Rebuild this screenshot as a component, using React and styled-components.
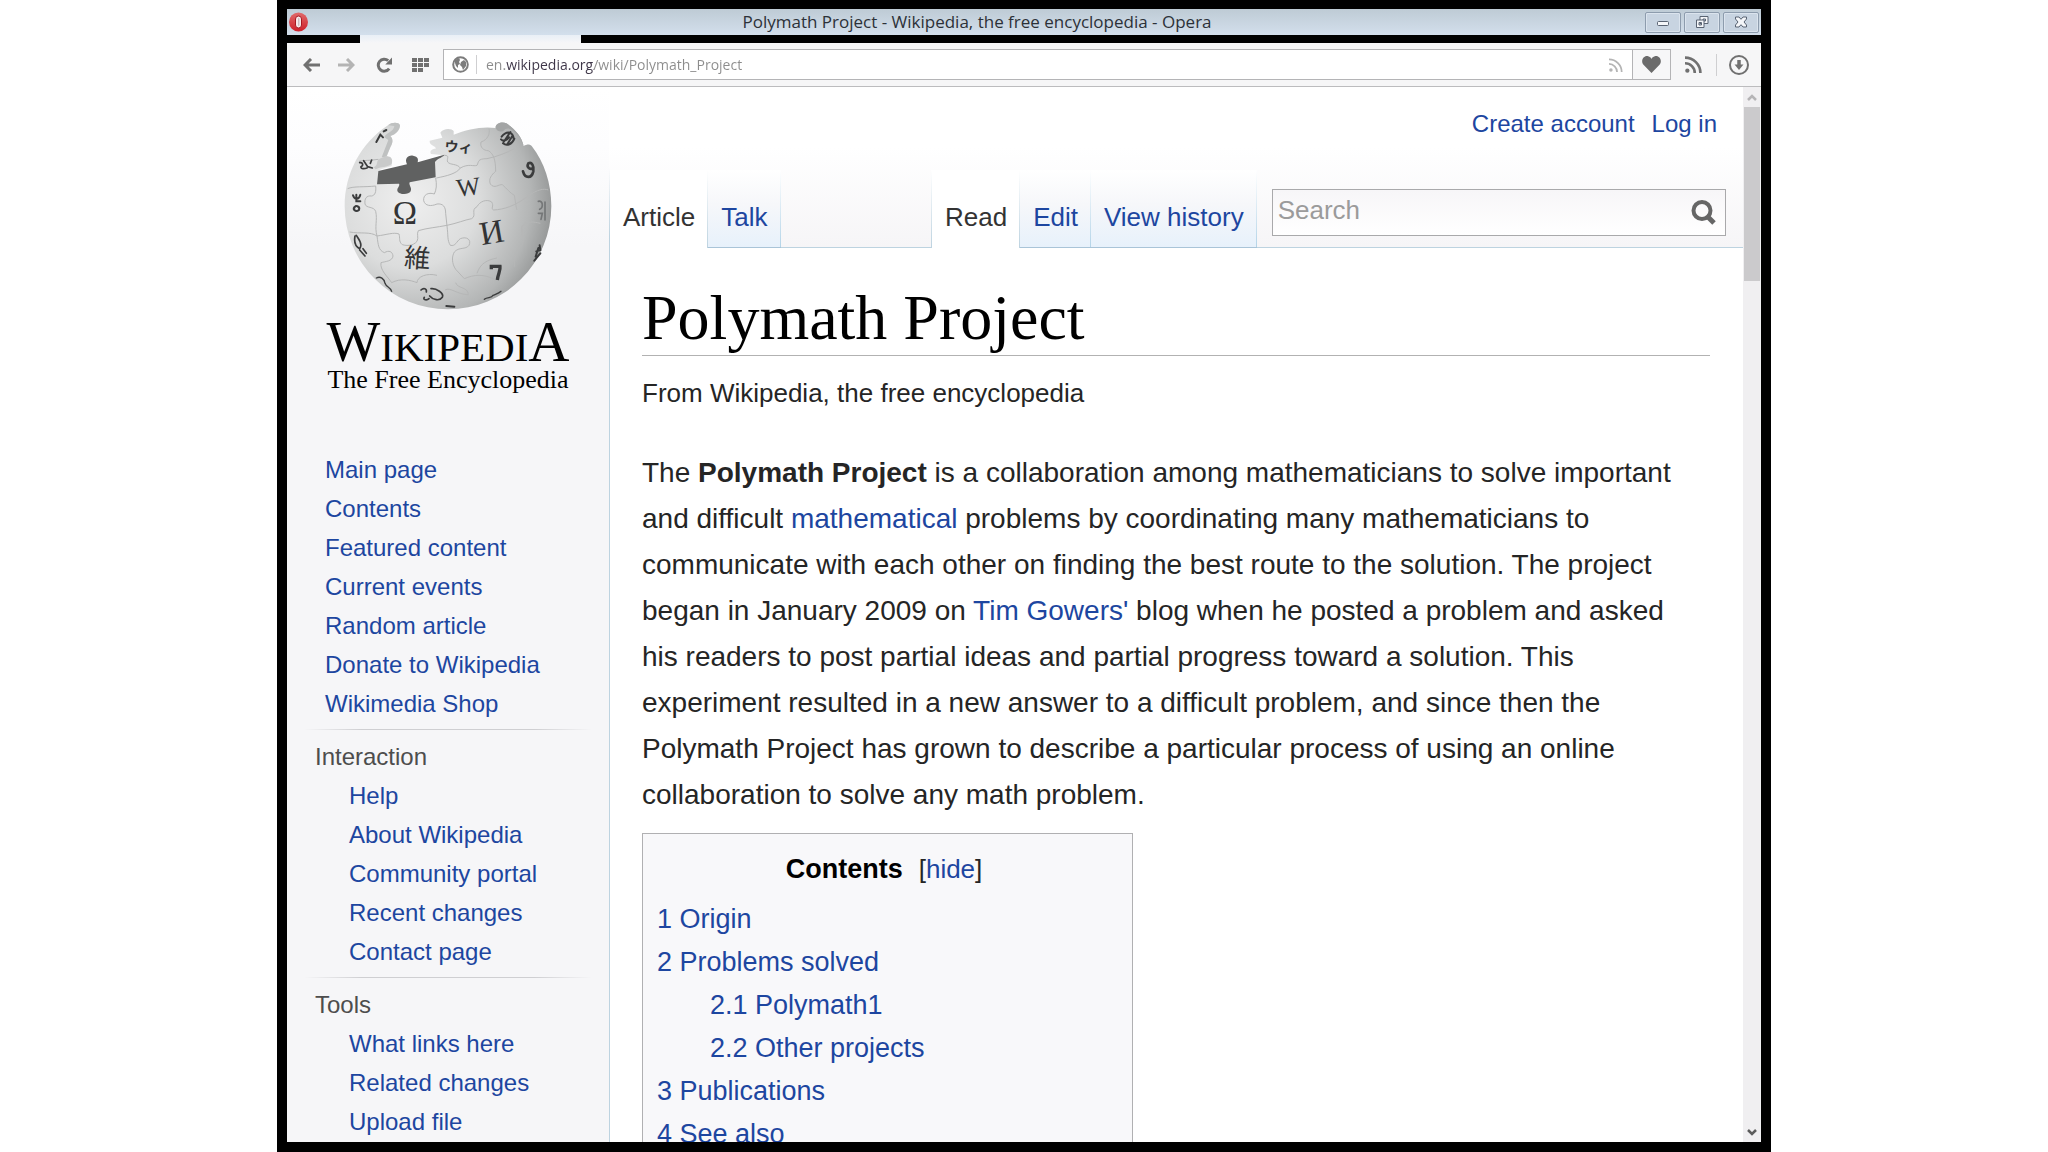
import React from "react";
import styled, { createGlobalStyle, css } from "styled-components";

const sans = `"Liberation Sans", Arial, sans-serif`;
const serif = `"Liberation Serif", "Times New Roman", serif`;
const ui = `"Open Sans", "Noto Sans", sans-serif`;
const linkBlue = "#1d46a0";
const rule = "#bdd3e0";

const GlobalStyle = createGlobalStyle`
  *, *::before, *::after { box-sizing: border-box; }
  body { margin: 0; background: #fff; font-family: ${sans}; color: #252525; }
  button { padding: 0; border: 0; background: none; font: inherit; color: inherit; }
  ul { list-style: none; margin: 0; padding: 0; }
  svg { display: block; flex: none; }
`;

const Frame = styled.div`
  display: flex;
  flex-direction: column;
  height: 100vh;
  margin: 0 277px;
  border: 10px solid #000;
  border-top-width: 9px;
  background: #fff;
  overflow: hidden;
`;

/* Window chrome */
const TitleBar = styled.header`
  display: flex;
  align-items: center;
  flex: none;
  height: 26px;
  padding: 0 2px;
  background: linear-gradient(#becbd5, #d3dfec);
`;
const TitleText = styled.div`
  flex: 1;
  text-align: center;
  font: 17px/24px ${ui};
  color: #2c3138;
`;
const WindowButtons = styled.div`
  display: flex;
  gap: 3px;
`;
const WindowButton = styled.button`
  display: flex;
  align-items: center;
  justify-content: center;
  width: 36px;
  height: 21px;
  border: 1px solid #8d9cad;
  border-radius: 2px;
  background: #c8d4e1;
  box-shadow: inset 0 0 0 1px #dbe4ee;
`;
const TabStrip = styled.div`
  flex: none;
  height: 8px;
  padding-left: 73px;
  background: #000;
`;
const ActiveTab = styled.div`
  width: 221px;
  height: 8px;
  background: linear-gradient(#e9eff6, #f6f6f8);
`;
const Toolbar = styled.div`
  display: flex;
  align-items: center;
  flex: none;
  height: 44px;
  padding-left: 13px;
  border-bottom: 1px solid #bcbcbe;
  background: #f6f6f7;
`;
const ToolButton = styled.button`
  display: flex;
  align-items: center;
  justify-content: center;
  width: ${(p) => p.$w || 37}px;
  height: 30px;
  color: ${(p) => (p.$dim ? "#b4b4b4" : "#707070")};
`;
const AddressBar = styled.form`
  display: flex;
  align-items: center;
  flex: 1;
  min-width: 0;
  height: 31px;
  margin-left: 1px;
  border: 1px solid #b4b4b6;
  background: #fff;
`;
const Divider = styled.span`
  width: 1px;
  height: ${(p) => p.$h}px;
  background: #cfcfd1;
`;
const AddressInput = styled.input`
  flex: 1;
  min-width: 0;
  height: 28px;
  margin-left: 9px;
  padding: 0;
  border: 0;
  outline: 0;
  font: 14px/28px ${ui};
  color: #8c8c8c;
  background: linear-gradient(90deg, #8c8c8c 19px, #3d3547 19px, #3d3547 108px, #8c8c8c 108px);
  -webkit-background-clip: text;
  background-clip: text;
  -webkit-text-fill-color: transparent;
`;
const HeartButton = styled(ToolButton)`
  width: 38px;
  height: 29px;
  border-left: 1px solid #b4b4b6;
  background: #f7f7f8;
`;

/* Page area */
const Viewport = styled.div`
  display: flex;
  flex: 1;
  min-height: 0;
`;
const Sidebar = styled.aside`
  flex: 0 0 322px;
  padding: 13px 17px 0;
  background: linear-gradient(#fff 0, #fdfdfe 60px, #f6f6f8 160px);
  overflow: hidden;
`;
const Logo = styled.a`
  display: flex;
  flex-direction: column;
  align-items: center;
  height: 350px;
  color: #000;
  font-family: ${serif};
  text-decoration: none;
`;
const Wordmark = styled.span`
  height: 52px;
  margin-top: 4px;
  font-size: 41px;
  line-height: 56px;
  white-space: nowrap;
`;
const Big = styled.span`
  font-size: 57px;
`;
const Tagline = styled.span`
  font-size: 26px;
  line-height: 28px;
  white-space: nowrap;
`;
const Portal = styled.nav`
  font-size: 24px;
  line-height: 39px;
  white-space: nowrap;
  & + &::before {
    content: "";
    display: block;
    height: 1px;
    margin: 6px 0 7px;
    background: linear-gradient(90deg, transparent, #cfcfd2 20%, #cfcfd2 80%, transparent);
  }
`;
const PortalTitle = styled.h3`
  margin: 0;
  padding-left: 11px;
  font-size: 24px;
  font-weight: 400;
  color: #4d4d4d;
`;
const PortalList = styled.ul`
  padding-left: ${(p) => (p.$nested ? 45 : 21)}px;
`;
const Link = styled.a`
  color: ${linkBlue};
  text-decoration: none;
`;

const Main = styled.main`
  flex: 1;
  min-width: 0;
  overflow: hidden;
`;
const PageHead = styled.div`
  display: flex;
  flex-direction: column;
  justify-content: space-between;
  height: 161px;
  background:
    linear-gradient(transparent 80px, ${rule} 150px) left / 1px 100% no-repeat,
    linear-gradient(#fff 60px, #f6f5f7 160px);
  box-shadow: inset 0 -1px ${rule};
`;
const Personal = styled.div`
  display: flex;
  justify-content: flex-end;
  gap: 17px;
  padding: 22px 26px 0 0;
  font-size: 24px;
  line-height: 30px;
`;
const TabRow = styled.div`
  display: flex;
  height: 78px;
  padding-left: 1px;
`;
const TabGroup = styled.nav`
  display: flex;
  flex: none;
  width: ${(p) => (p.$w ? p.$w + "px" : "auto")};
  background: linear-gradient(#fff, ${rule}) right / 1px 100% no-repeat;
`;
const Tab = styled.a`
  padding: 30px 13px 0;
  font-size: 26px;
  line-height: 34px;
  white-space: nowrap;
  text-decoration: none;
  ${(p) =>
    p.$selected
      ? css`
          color: #333;
          background: linear-gradient(#fff, ${rule}) right / 1px 100% no-repeat, #fff;
        `
      : css`
          color: ${linkBlue};
          border-bottom: 1px solid #a9c4d8;
          background:
            linear-gradient(#fff, #b4d4e8) right / 1px 100% no-repeat,
            linear-gradient(#fff 0, #f6f7fa 45%, #e7f1fb 100%);
        `}
`;
const SearchForm = styled.form`
  display: flex;
  align-items: center;
  flex: 1;
  min-width: 0;
  height: 47px;
  margin: 19px 17px 0 15px;
  padding: 0 9px 0 5px;
  border: 1px solid #a9a9ab;
  background: linear-gradient(#f7f6f8, #fff);
`;
const SearchInput = styled.input`
  flex: 1;
  min-width: 0;
  padding: 0 0 5px;
  border: 0;
  outline: 0;
  background: none;
  font: 26px/34px ${sans};
  &::placeholder { color: #9b9b9b; opacity: 1; }
`;
const Article = styled.article`
  padding: 36px 33px 0 32px;
  border-left: 1px solid ${rule};
`;
const Title = styled.h1`
  margin: 0;
  padding-bottom: 3px;
  border-bottom: 1px solid #b2b2b2;
  font: 400 64px/68px ${serif};
  color: #000;
`;
const Subtitle = styled.div`
  margin-top: 20px;
  font-size: 26px;
  line-height: 34px;
`;
const Paragraph = styled.p`
  margin: 40px 0 15px;
  padding-right: 12px;
  font-size: 28px;
  line-height: 46px;
`;
const Toc = styled.section`
  width: 491px;
  height: 420px;
  padding: 14px;
  border: 1px solid #b0b0b2;
  background: #f8f8fa;
  font-size: 27px;
  line-height: 43px;
`;
const TocHead = styled.div`
  display: flex;
  justify-content: center;
  gap: 16px;
  height: 50px;
  padding-right: 7px;
`;
const TocTitle = styled.h2`
  margin: 0;
  font-size: 27px;
  color: #000;
`;
const Toggle = styled.span`
  font-size: 26px;
`;
const SubList = styled.ul`
  padding-left: 53px;
`;

const ScrollTrack = styled.div`
  display: flex;
  flex-direction: column;
  flex: 0 0 18px;
  padding: 0 1px;
  background: #f0eff1;
`;
const ScrollArrow = styled.button`
  display: flex;
  align-items: center;
  justify-content: center;
  height: 20px;
`;
const Thumb = styled.div`
  height: 174px;
  background: #cbcacc;
`;
const Spring = styled.div`
  flex: 1;
`;

const OperaIcon = () => (
  <svg width="20" height="20" viewBox="0 0 20 20">
    <defs>
      <linearGradient id="op" x1="0" y1="0" x2="0" y2="1">
        <stop offset="0" stopColor="#e06a6a" />
        <stop offset="1" stopColor="#cf1f2a" />
      </linearGradient>
    </defs>
    <circle cx="9.5" cy="10" r="9.5" fill="url(#op)" />
    <rect x="6.5" y="4" width="6" height="12" rx="3" fill="#f6e9ea" stroke="#a71720" strokeWidth="1" />
    <rect x="9" y="6" width="1.4" height="8" rx=".7" fill="#c9bcc0" />
  </svg>
);
const Arrow = ({ flip }) => (
  <svg width="17" height="14" viewBox="0 0 17 14" fill="none" stroke="currentColor" strokeWidth="3">
    <path d={flip ? "M0 7h14M9 1l6 6-6 6" : "M17 7H3M8 1L2 7l6 6"} />
  </svg>
);
const ReloadIcon = () => (
  <svg width="17" height="16" viewBox="0 0 17 16">
    <path d="M13.2 11.6A6 6 0 1 1 12.2 3.6" fill="none" stroke="currentColor" strokeWidth="3" />
    <path d="M16 .5V7.500H9.300Z" fill="currentColor" />
  </svg>
);
const GridIcon = () => (
  <svg width="17" height="14" viewBox="0 0 17 14" fill="currentColor">
    {[0, 6, 12].map((x) =>
      [0, 5, 10].map((y) => (x === 12 && y === 10 ? null : <rect key={x + "-" + y} x={x} y={y} width="5" height="4" />))
    )}
  </svg>
);
const GlobeIcon = () => (
  <svg width="17" height="17" viewBox="0 0 17 17">
    <circle cx="8.500" cy="8.500" r="7.300" fill="#fff" stroke="#7c7c7c" strokeWidth="2" />
    <path d="M3 4l4-2 1 2-1 2 1 2-2 1 0 3-2-2-1-3zM9 6l3-2 2 2 0 4-3 4-1-3-2-2z" fill="#7c7c7c" />
  </svg>
);
const FeedIcon = ({ size, w }) => (
  <svg width={size} height={size} viewBox="0 0 16 16" fill="none" stroke="currentColor" strokeWidth={w}>
    <circle cx="2.200" cy="13.800" r="2" fill="currentColor" stroke="none" />
    <path d="M0 6.800A9.200 9.200 0 0 1 9.200 16M0 1.500A14.500 14.500 0 0 1 14.500 16" />
  </svg>
);
const HeartIcon = () => (
  <svg width="19" height="17" viewBox="0 0 19 17">
    <path d="M9.500 17L1.500 8.700C-2 4.500 2-1 6.200.300 7.800.700 9 1.800 9.500 3 10 1.800 11.200.700 12.800.300 17-1 21 4.500 17.500 8.700Z" fill="#6b6b6b" />
  </svg>
);
const DownloadIcon = () => (
  <svg width="20" height="20" viewBox="0 0 20 20" fill="none" stroke="#707070" strokeWidth="2">
    <circle cx="10" cy="10" r="9" />
    <path d="M10 5v5" strokeWidth="3.500" />
    <path d="M5.500 9.500h9L10 15z" fill="#707070" stroke="none" />
  </svg>
);
const SearchIcon = () => (
  <svg width="25" height="25" viewBox="0 0 25 25" fill="none" stroke="#666">
    <circle cx="11" cy="10.500" r="8.500" strokeWidth="4" />
    <path d="M16.500 16.500l6.500 6.500" strokeWidth="5" />
  </svg>
);
const MinimizeIcon = () => (
  <svg width="14" height="14" viewBox="0 0 14 14">
    <rect x="1.500" y="6.500" width="11" height="4" rx="1" fill="#f4f6f9" stroke="#596372" />
  </svg>
);
const RestoreIcon = () => (
  <svg width="14" height="14" viewBox="0 0 14 14" fill="#f4f6f9" stroke="#596372">
    <path d="M5 1.500h8v7H5zM8 4h2.500v2H8z" fillRule="evenodd" />
    <path d="M1.500 5h7.500v7.500H1.500zM4 7.500h2.500V10H4z" fillRule="evenodd" />
  </svg>
);
const CloseIcon = () => (
  <svg width="14" height="14" viewBox="0 0 14 14">
    <path d="M1.500 2h3.500l2 2.300L9 2h3.500v2L10 7l2.500 3v2H9L7 9.700 5 12H1.500v-2L4 7 1.500 4z" fill="#f4f6f9" stroke="#596372" />
  </svg>
);
const Chevron = ({ down }) => (
  <svg width="10" height="7" viewBox="0 0 10 7" fill="none" stroke={down ? "#5c5c5c" : "#b5b4b6"} strokeWidth="2.500">
    <path d={down ? "M1 1l4 4 4-4" : "M1 6l4-4 4 4"} />
  </svg>
);

const PuzzleGlobe = () => (
  <svg width="290" height="210" viewBox="-22 0 870 630" role="img" aria-label="Wikipedia puzzle globe">
    <defs>
      <radialGradient id="ball" gradientUnits="userSpaceOnUse" cx="300" cy="300" r="450">
        <stop offset="0" stopColor="#efefef" />
        <stop offset=".45" stopColor="#dcdddd" />
        <stop offset=".8" stopColor="#b4b6b6" />
        <stop offset="1" stopColor="#8c8e8e" />
      </radialGradient>
    </defs>
    <path
      fill="url(#ball)"
      d="M233 76C244 66 266 66 269 76C268 92 256 104 240 108C250 118 247 130 240 142L230 168C238 172 246 178 244 198C230 204 206 206 204 214L200 253L372 232L374 186L402 166L362 162C356 152 366 146 376 146C378 138 356 138 358 122L396 113L390 98C398 84 424 84 430 93L430 104C470 88 516 78 556 84C554 68 578 64 588 70C612 86 634 108 640 138C650 132 658 132 664 138C702 186 723 250 723 318A310 310 0 0 1 103 318C103 222 150 130 233 76Z"
    />
    <path d="M233 76C244 66 266 66 269 76C268 92 256 104 240 108C250 118 247 130 240 142L228 170L214 172L234 120L222 112C226 98 250 96 252 78Z" fill="#bfc1c1" />
    <path d="M556 84C554 68 578 64 588 70C612 86 634 108 640 138L628 112C608 86 590 78 580 92C572 98 560 94 556 84Z" fill="#a3a5a5" />
    <path
      fill="#606161"
      d="M200 253L204 213L290 193C282 176 292 165 308 167C324 170 324 178 322 187L402 164C402 170 380 176 374 186L376 232L298 247C294 256 306 262 301 274C294 286 264 284 261 272C260 262 270 258 266 251Z"
    />
    <path d="M196 208C210 200 234 202 244 192C250 174 238 166 222 170L208 176C196 180 206 194 190 202Z" fill="#c9caca" />
    <g fill="none" stroke="#b6b7b7" strokeWidth="3" strokeLinejoin="round">
      <path d="M112 266C130 258 160 262 196 258C198 276 194 286 184 288C168 286 162 296 164 312C168 326 190 318 196 334C202 360 192 380 200 408" />
      <path d="M376 234C380 254 378 270 372 282C354 276 338 284 340 302C344 318 362 320 380 312C398 310 406 320 406 340L410 378C414 406 410 420 420 436C436 440 438 424 450 416C470 408 484 420 476 436C466 450 446 440 432 456C424 470 424 490 436 508L462 536" />
      <path d="M118 396C150 402 180 394 200 408C230 404 250 396 266 402C270 414 264 424 276 434C290 438 308 438 320 424C326 412 318 402 324 392C350 384 380 382 410 376C440 370 462 360 484 356C500 346 480 330 500 320C508 304 530 296 544 306C552 318 540 326 550 330C580 328 612 320 656 286" />
      <path d="M378 234C410 228 440 220 450 204C440 190 420 196 412 186C408 176 420 166 402 166M450 204C474 190 490 200 500 196C506 186 500 176 530 176C560 170 590 158 612 146" />
      <path d="M536 86C540 100 532 120 512 126C508 142 520 152 534 152C548 160 556 176 556 214C544 224 534 236 540 252C552 268 566 252 576 254C590 266 600 280 612 286C616 306 616 318 620 330" />
      <path d="M200 408C204 436 204 450 222 458C236 450 246 454 248 468C246 484 226 484 212 488C208 510 232 530 244 548M244 548C270 534 300 540 320 548C320 530 350 518 380 526M404 570C420 560 440 584 474 584C474 560 440 566 436 548M462 536C490 524 520 520 556 540M500 520C510 490 530 480 560 474" />
      <path d="M146 184C162 180 180 182 204 178M656 286C680 270 700 264 714 270M634 380C650 360 670 366 690 370M634 380C632 400 644 420 636 434C620 450 610 470 612 500" />
    </g>
    <g fill="#333435" fontFamily={serif}>
      <text x="247" y="373" fontSize="98">Ω</text>
      <text x="438" y="286" fontSize="76" transform="rotate(-7 475 260)">W</text>
      <text x="508" y="430" fontSize="100" transform="rotate(-10 545 395)">И</text>
      <text x="282" y="502" fontSize="78" fontFamily='"Noto Sans CJK JP", sans-serif' transform="rotate(4 320 475)">維</text>
      <text x="403" y="156" fontSize="42" fontWeight="700" fontFamily='"Noto Sans CJK JP", sans-serif' transform="rotate(4 440 140)">ウィ</text>
    </g>
    <g fill="none" stroke="#3b3c3d" strokeWidth="6" strokeLinecap="round">
      <path d="M543 508V499H569C571 512 563 522 561 540" strokeWidth="10" strokeLinecap="butt" />
      <path d="M638 214C644 236 664 236 669 214C672 198 664 184 654 190C648 200 656 210 668 205" strokeWidth="8" />
      <path d="M574 110C590 90 608 96 610 116M580 126L600 96M590 134L606 108M578 130C590 140 606 132 612 116M572 118C580 126 590 120 596 112" />
      <path d="M198 126L210 104L218 112M220 94L228 90" />
      <path d="M148 188C158 186 160 196 152 200C150 208 164 206 170 204M160 182L172 200L186 204M184 180L180 190" strokeWidth="5" />
      <path d="M128 286C132 300 146 300 150 284M138 284V304H150M136 318C122 326 136 338 146 330C150 318 134 314 132 324" />
      <path d="M134 408C130 430 136 440 148 446C160 430 142 414 138 406M148 450L164 468M158 446L168 460" strokeWidth="5" />
      <path d="M198 534C210 528 222 536 224 550C228 562 240 560 244 574" strokeWidth="4" />
      <path d="M332 570C340 562 350 566 348 576M342 592C336 600 350 602 356 596M362 566C378 564 402 580 396 592C388 604 368 600 358 588" strokeWidth="5" />
      <path d="M408 618L432 620" />
      <path d="M522 598C532 590 544 596 548 586C558 582 566 580 572 574" strokeWidth="4" />
      <path d="M684 304C698 300 700 322 688 328M684 340H696L692 358M704 306V360" stroke="#747677" strokeWidth="5" />
      <path d="M688 436L690 450L678 454M690 460L672 482M684 444L676 470" />
    </g>
  </svg>
);

const PortalLinks = ({ items, nested }) => (
  <PortalList $nested={nested}>
    {items.map((t) => (
      <li key={t}><Link href="#">{t}</Link></li>
    ))}
  </PortalList>
);

export default function App() {
  const stop = (e) => e.preventDefault();
  return (
    <>
      <GlobalStyle />
      <Frame>
        <TitleBar>
          <OperaIcon />
          <TitleText>Polymath Project - Wikipedia, the free encyclopedia - Opera</TitleText>
          <WindowButtons>
            <WindowButton aria-label="Minimize"><MinimizeIcon /></WindowButton>
            <WindowButton aria-label="Restore"><RestoreIcon /></WindowButton>
            <WindowButton aria-label="Close"><CloseIcon /></WindowButton>
          </WindowButtons>
        </TitleBar>
        <TabStrip><ActiveTab /></TabStrip>
        <Toolbar>
          <ToolButton $w={22} aria-label="Back"><Arrow /></ToolButton>
          <ToolButton $w={48} $dim aria-label="Forward"><Arrow flip /></ToolButton>
          <ToolButton $w={28} aria-label="Reload"><ReloadIcon /></ToolButton>
          <ToolButton $w={44} aria-label="Speed dial"><GridIcon /></ToolButton>
          <AddressBar onSubmit={stop}>
            <ToolButton type="button" $w={32} aria-label="Site information"><GlobeIcon /></ToolButton>
            <Divider $h={19} />
            <AddressInput aria-label="Address" defaultValue="en.wikipedia.org/wiki/Polymath_Project" />
            <ToolButton type="button" $w={32} $dim aria-label="Page feed"><FeedIcon size={14} w={2} /></ToolButton>
            <HeartButton type="button" aria-label="Add to favourites"><HeartIcon /></HeartButton>
          </AddressBar>
          <ToolButton $w={45} aria-label="Feeds"><FeedIcon size={17} w={2.5} /></ToolButton>
          <Divider $h={22} />
          <ToolButton $w={44} aria-label="Downloads"><DownloadIcon /></ToolButton>
        </Toolbar>
        <Viewport>
          <Sidebar>
            <Logo href="#">
              <PuzzleGlobe />
              <Wordmark><Big>W</Big>IKIPEDI<Big>A</Big></Wordmark>
              <Tagline>The Free Encyclopedia</Tagline>
            </Logo>
            <Portal>
              <PortalLinks
                items={["Main page", "Contents", "Featured content", "Current events", "Random article", "Donate to Wikipedia", "Wikimedia Shop"]}
              />
            </Portal>
            <Portal>
              <PortalTitle>Interaction</PortalTitle>
              <PortalLinks nested items={["Help", "About Wikipedia", "Community portal", "Recent changes", "Contact page"]} />
            </Portal>
            <Portal>
              <PortalTitle>Tools</PortalTitle>
              <PortalLinks nested items={["What links here", "Related changes", "Upload file"]} />
            </Portal>
          </Sidebar>
          <Main>
            <PageHead>
              <Personal>
                <Link href="#">Create account</Link>
                <Link href="#">Log in</Link>
              </Personal>
              <TabRow>
                <TabGroup $w={322}>
                  <Tab href="#" $selected>Article</Tab>
                  <Tab href="#">Talk</Tab>
                </TabGroup>
                <TabGroup>
                  <Tab href="#" $selected>Read</Tab>
                  <Tab href="#">Edit</Tab>
                  <Tab href="#">View history</Tab>
                </TabGroup>
                <SearchForm onSubmit={stop}>
                  <SearchInput type="text" placeholder="Search" aria-label="Search" />
                  <button aria-label="Go"><SearchIcon /></button>
                </SearchForm>
              </TabRow>
            </PageHead>
            <Article>
              <Title>Polymath Project</Title>
              <Subtitle>From Wikipedia, the free encyclopedia</Subtitle>
              <Paragraph>
                The <b>Polymath Project</b> is a collaboration among mathematicians to solve important and difficult{" "}
                <Link href="#">mathematical</Link> problems by coordinating many mathematicians to communicate with each
                other on finding the best route to the solution. The project began in January 2009 on{" "}
                <Link href="#">Tim Gowers'</Link> blog when he posted a problem and asked his readers to post partial
                ideas and partial progress toward a solution. This experiment resulted in a new answer to a difficult
                problem, and since then the Polymath Project has grown to describe a particular process of using an
                online collaboration to solve any math problem.
              </Paragraph>
              <Toc>
                <TocHead>
                  <TocTitle>Contents</TocTitle>
                  <Toggle>[<Link href="#">hide</Link>]</Toggle>
                </TocHead>
                <ul>
                  <li><Link href="#">1 Origin</Link></li>
                  <li>
                    <Link href="#">2 Problems solved</Link>
                    <SubList>
                      <li><Link href="#">2.1 Polymath1</Link></li>
                      <li><Link href="#">2.2 Other projects</Link></li>
                    </SubList>
                  </li>
                  <li><Link href="#">3 Publications</Link></li>
                  <li><Link href="#">4 See also</Link></li>
                </ul>
              </Toc>
            </Article>
          </Main>
          <ScrollTrack>
            <ScrollArrow aria-label="Scroll up"><Chevron /></ScrollArrow>
            <Thumb />
            <Spring />
            <ScrollArrow aria-label="Scroll down"><Chevron down /></ScrollArrow>
          </ScrollTrack>
        </Viewport>
      </Frame>
    </>
  );
}
